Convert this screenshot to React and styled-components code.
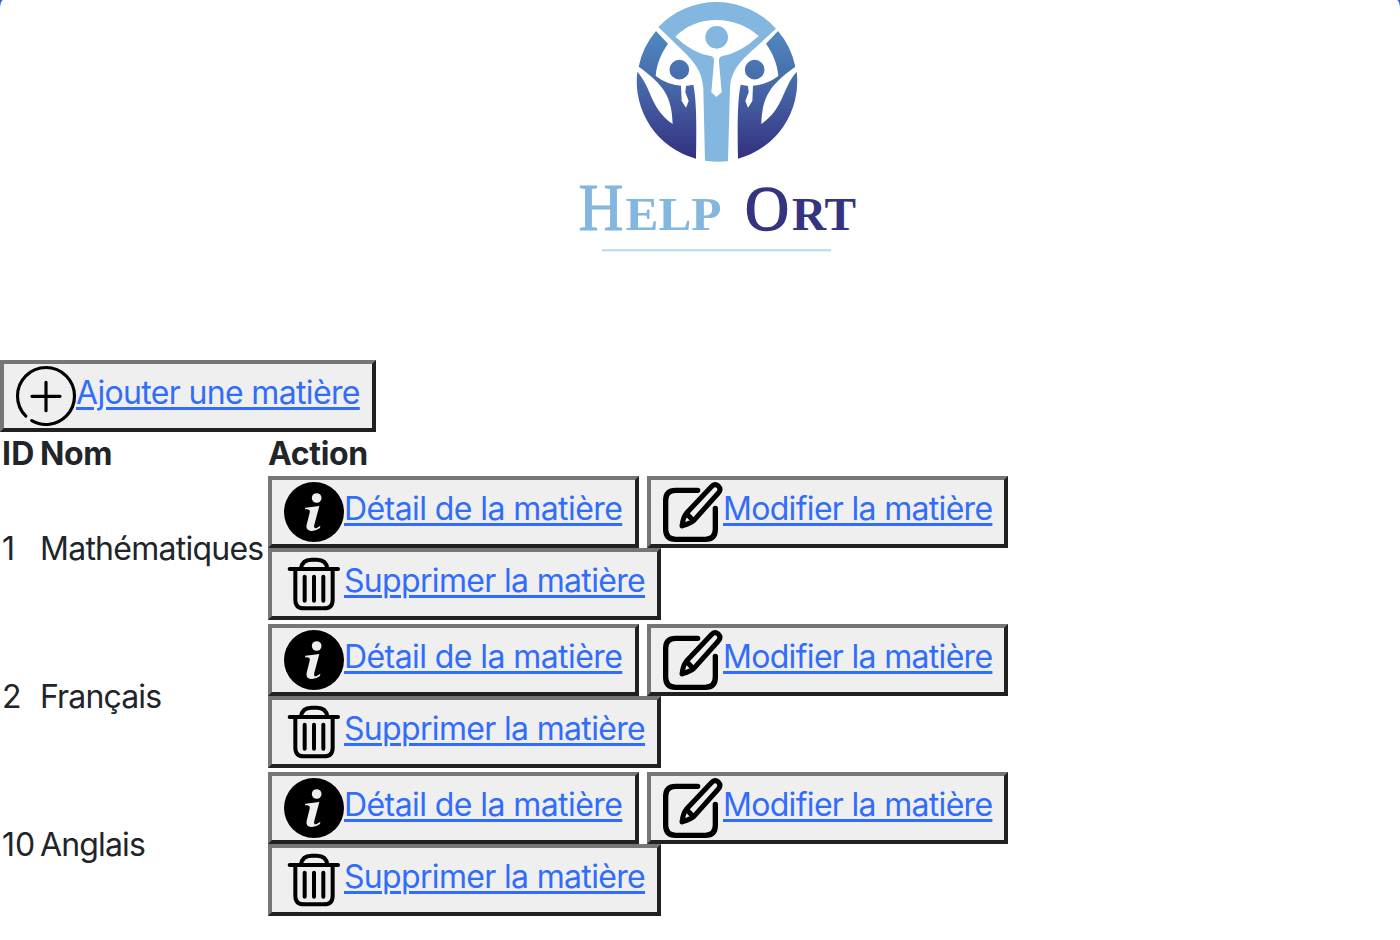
import React from "react";
import styled, { createGlobalStyle } from "styled-components";

const GlobalStyle = createGlobalStyle`
  *, *::before, *::after { box-sizing: border-box; }
  html { background: #2f5fe8; }
  body {
    margin: 0;
    color: #212529;
    font-family: Inter, "Liberation Sans", sans-serif;
    font-size: 32px;
    line-height: 38px;
  }
`;

const Page = styled.main`
  height: 940px;
  overflow: hidden;
  background: #fff;
  border-radius: 3px 3px 0 0 / 9px 9px 0 0;
`;

const Header = styled.header`
  height: 360px;
  padding-left: 34px;
  display: flex;
  justify-content: center;
  align-items: flex-start;
`;

const LogoArt = styled.svg`
  display: block;
  width: 300px;
  height: 260px;
  font-family: "Liberation Serif", serif;
`;

const ActionButton = styled.button`
  display: flex;
  align-items: flex-start;
  height: 72px;
  padding: 2px 12px;
  border: 4px solid;
  border-color: #767676 #212121 #212121 #767676;
  background: #efefef;
  font: inherit;
  white-space: nowrap;
`;

const Icon = styled.svg`
  flex: none;
  width: 60px;
  height: 60px;
  overflow: visible;
`;

const Label = styled.a`
  width: ${(p) => p.$width}px;
  color: #316dfa;
  font-size: 32px;
  line-height: 53px;
  text-align: left;
  letter-spacing: ${(p) => p.$tracking}px;
  text-decoration: underline;
  text-decoration-thickness: 3px;
  text-underline-offset: 3px;
`;

const Table = styled.table`
  width: 100%;
  table-layout: fixed;
  border-collapse: collapse;
`;

const Column = styled.col`
  width: ${(p) => p.$width};
`;

const HeadCell = styled.th`
  padding: 3px 2px 1px;
  text-align: left;
  font-weight: 700;
  white-space: nowrap;
  letter-spacing: ${(p) => p.$tracking || 0}px;
`;

const Cell = styled.td`
  padding: 4px 2px 2px;
  vertical-align: middle;
  white-space: nowrap;
  letter-spacing: ${(p) => p.$tracking || 0}px;
`;

const ActionCell = styled(Cell)`
  padding: 2px;
`;

const Actions = styled.div`
  display: flex;
  flex-wrap: wrap;
  column-gap: 8.5px;
`;

const stroke = { fill: "none", stroke: "#000", strokeLinecap: "round", strokeLinejoin: "round" };

const PlusIcon = () => (
  <Icon viewBox="0 0 180 180" {...stroke} strokeWidth="9.5">
    <circle cx="90" cy="90" r="85.5" pathLength="360" strokeDasharray="345 15" transform="rotate(135 90 90)" />
    <path d="M90 49V134M48 91H132" />
  </Icon>
);

const InfoIcon = () => (
  <Icon viewBox="0 0 180 180">
    <circle cx="90" cy="90" r="90" fill="#000" />
    <circle cx="98" cy="48" r="14.5" fill="#efefef" />
    <path fill="#efefef" d="M64 77L106 72L91 128Q88 142 98 138Q103 135 109 131L108 138Q94 148 82 147Q64 145 68 128L77 92Q80 80 63 82Z" />
  </Icon>
);

const EditIcon = () => (
  <Icon viewBox="0 0 180 180" {...stroke} strokeWidth="16">
    <path d="M104 25H38Q8 25 8 55V142Q8 172 38 172H127Q157 172 157 142V79" />
    <path strokeWidth="15" d="M70 94L145 14Q155 3 166 12Q176 22 166 33L92 116Q87 122 57 132Q60 105 70 94ZM70 94L91 116" />
  </Icon>
);

const TrashIcon = () => (
  <Icon viewBox="0 0 180 180" {...stroke} strokeWidth="12">
    <path d="M17 45H162" />
    <path d="M51 43Q55 17 82 17H99Q126 17 130 43" />
    <path d="M34 46V137Q34 163 60 163H120Q146 163 146 137V46" />
    <path d="M62 68V140M90 68V140M118 68V140" />
  </Icon>
);

const SideFigure = () => (
  <>
    <path
      fill="url(#deep)"
      d="M90 93L126 131C104 163 92 192 89 228Q125 255 165 257L167 303L180 323L188 303L178 277L180 258L202 254C212 300 212 390 210 476A240 240 0 0 1 34 215C80 268 70 322 140 372C138 292 115 255 38 200A240 240 0 0 1 90 93Z"
    />
    <circle cx="160" cy="209" r="29.5" fill="url(#deep)" />
  </>
);

const Logo = () => (
  <LogoArt viewBox="567 0 300 260" role="img" aria-label="Help Ort">
    <defs>
      <linearGradient id="deep" gradientUnits="userSpaceOnUse" x1="0" y1="90" x2="0" y2="476">
        <stop offset="0" stopColor="#4f8ac0" />
        <stop offset="0.5" stopColor="#4562a4" />
        <stop offset="1" stopColor="#343080" />
      </linearGradient>
    </defs>
    <g transform="translate(626 0) scale(.33333)">
      <SideFigure />
      <g transform="translate(546 0) scale(-1 1)">
        <SideFigure />
      </g>
      <path
        fill="#84b7df"
        d="M97 81A240 240 0 0 1 450 86L388 143C335 190 315 215 312 265L306 484Q272 487 237 482L232 265C228 212 205 184 158 140Z"
      />
      <path fill="#fff" d="M148 110Q198 60 272 60Q345 61 398 108Q345 158 287 169Q278 172 279 185L287 277L271 291L256 277L264 185Q265 172 257 169Q200 160 148 110Z" />
      <circle cx="272" cy="112" r="34" fill="#84b7df" />
    </g>
    <g fill="#84b7df">
      <text x="578.5" y="230" fontSize="67" stroke="#84b7df" strokeWidth="1" textLength="45" lengthAdjust="spacingAndGlyphs">H</text>
      <text x="625.5" y="230" fontSize="47" fontWeight="700" textLength="96" lengthAdjust="spacingAndGlyphs">ELP</text>
    </g>
    <g fill="#343480">
      <text x="745" y="229.5" fontSize="64" stroke="#343480" strokeWidth="1.5" textLength="44" lengthAdjust="spacingAndGlyphs">O</text>
      <text x="792" y="230" fontSize="47" fontWeight="700" textLength="64" lengthAdjust="spacingAndGlyphs">RT</text>
    </g>
    <path d="M602 250.3H831" stroke="#b5d8ee" strokeWidth="2" />
  </LogoArt>
);

const subjects = [
  { id: 1, name: "Mathématiques", tracking: -0.75 },
  { id: 2, name: "Français", tracking: -0.85 },
  { id: 10, name: "Anglais", tracking: -0.85 },
];

export default function App() {
  return (
    <>
      <GlobalStyle />
      <Page>
        <Header>
          <Logo />
        </Header>
        <ActionButton>
          <PlusIcon />
          <Label href="#" $width={284} $tracking={-0.66}>Ajouter une matière</Label>
        </ActionButton>
        <Table>
          <colgroup>
            <Column $width="38px" />
            <Column $width="228px" />
            <Column $width="auto" />
          </colgroup>
          <thead>
            <tr>
              <HeadCell $tracking={0.3}>ID</HeadCell>
              <HeadCell $tracking={-0.4}>Nom</HeadCell>
              <HeadCell $tracking={-0.35}>Action</HeadCell>
            </tr>
          </thead>
          <tbody>
            {subjects.map(({ id, name, tracking }) => (
              <tr key={id}>
                <Cell>{id}</Cell>
                <Cell $tracking={tracking}>{name}</Cell>
                <ActionCell>
                  <Actions>
                    <ActionButton>
                      <InfoIcon />
                      <Label href="#" $width={278.5} $tracking={-0.58}>Détail de la matière</Label>
                    </ActionButton>
                    <ActionButton>
                      <EditIcon />
                      <Label href="#" $width={269} $tracking={-0.69}>Modifier la matière</Label>
                    </ActionButton>
                    <ActionButton>
                      <TrashIcon />
                      <Label href="#" $width={301} $tracking={-0.67}>Supprimer la matière</Label>
                    </ActionButton>
                  </Actions>
                </ActionCell>
              </tr>
            ))}
          </tbody>
        </Table>
      </Page>
    </>
  );
}
